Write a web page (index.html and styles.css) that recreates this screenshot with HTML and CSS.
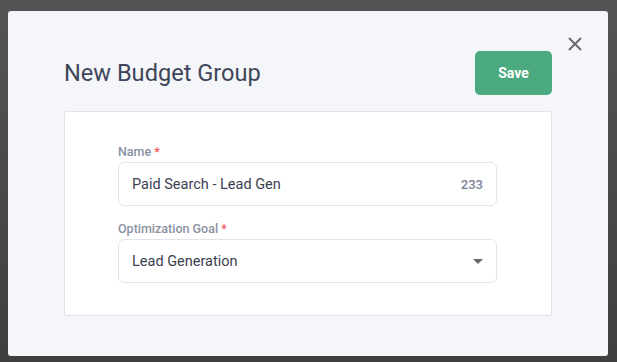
FILE: index.html
```html
<!DOCTYPE html>
<html lang="en">
<head>
    <meta charset="UTF-8">
    <meta name="viewport" content="width=device-width, initial-scale=1.0">
    <title>New Budget Group</title>
    <link rel="stylesheet" href="styles.css">
</head>
<body>
    <div class="modal">
        <button class="close-btn" aria-label="Close">
            <svg width="14" height="14" viewBox="0 0 14 14">
                <path d="M1 1 L13 13 M13 1 L1 13" stroke="#6b6b6b" stroke-width="2" fill="none"/>
            </svg>
        </button>
        <div class="modal-header">
            <h1>New Budget Group</h1>
            <button class="button save-btn">Save</button>
        </div>
        <div class="card">
            <div class="form-group">
                <label for="name">Name<span class="req">*</span></label>
                <div class="field">
                    <span class="value">Paid Search - Lead Gen</span>
                    <span class="counter">233</span>
                </div>
            </div>
            <div class="form-group">
                <label for="goal">Optimization Goal<span class="req">*</span></label>
                <div class="field">
                    <span class="value">Lead Generation</span>
                    <span class="caret"></span>
                </div>
            </div>
        </div>
    </div>
</body>
</html>
```

FILE: styles.css
```css
body {
    font-family: Roboto, Arial, sans-serif;
    margin: 0;
    padding: 11px 0 0 8px;
    height: 362px;
    box-sizing: border-box;
    background: linear-gradient(#545454, #3f3f3f);
    overflow: hidden;
}
.modal {
    position: relative;
    width: 600px;
    height: 345px;
    box-sizing: border-box;
    padding: 40px 56px 0 56px;
    background: #f5f6fa;
    border-radius: 3px;
}
.close-btn {
    position: absolute;
    top: 26px;
    right: 26px;
    padding: 0;
    border: none;
    background: none;
    width: 14px;
    height: 14px;
    display: flex;
}
.modal-header {
    display: flex;
    justify-content: space-between;
    align-items: center;
    height: 44px;
    margin-bottom: 16px;
}
h1 {
    margin: 0;
    font-size: 23.6px;
    font-weight: 400;
    color: #3e4559;
}
.button {
    border: none;
    border-radius: 5px;
    font-family: Roboto, Arial, sans-serif;
    font-size: 14px;
    font-weight: 700;
    color: white;
    width: 77px;
    height: 44px;
}
.save-btn {
    background: #4caa80;
}
.card {
    background: white;
    border: 1px solid #e0e3ea;
    border-radius: 2px;
    height: 205px;
    box-sizing: border-box;
    padding: 32px 54px 0 53px;
}
.form-group {
    margin-bottom: 15px;
}
.form-group label {
    display: block;
    font-size: 12.5px;
    font-weight: 500;
    line-height: 16px;
    color: #8a91a2;
    margin-bottom: 2px;
}
.req {
    color: #f05b5b;
    margin-left: 3px;
}
.field {
    display: flex;
    align-items: center;
    justify-content: space-between;
    height: 44px;
    box-sizing: border-box;
    padding: 0 13px 0 13px;
    border: 1px solid #e1e4ea;
    border-radius: 6px;
    background: white;
}
.value {
    font-size: 14.5px;
    color: #3a4150;
}
.counter {
    font-size: 13px;
    font-weight: 500;
    color: #7b8497;
}
.caret {
    width: 0;
    height: 0;
    border-left: 5px solid transparent;
    border-right: 5px solid transparent;
    border-top: 5px solid #666;
}
```
